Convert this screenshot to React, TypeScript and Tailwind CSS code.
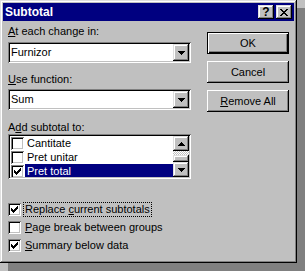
import React from 'react';

const raised =
  'shadow-[inset_-1px_-1px_0_#000,inset_1px_1px_0_#dfdfdf,inset_-2px_-2px_0_#808080,inset_2px_2px_0_#fff]';
const sunken =
  'shadow-[inset_1px_1px_0_#808080,inset_-1px_-1px_0_#fff,inset_2px_2px_0_#000,inset_-2px_-2px_0_#c0c0c0]';
const button =
  'shadow-[inset_-1px_-1px_0_#000,inset_1px_1px_0_#fff,inset_-2px_-2px_0_#808080]';
const defaultButton =
  'shadow-[inset_1px_1px_0_#000,inset_-1px_-1px_0_#000,inset_2px_2px_0_#fff,inset_-2px_-2px_0_#000,inset_-3px_-3px_0_#808080]';

function Arrow({ up }: { up?: boolean }) {
  return (
    <svg width="7" height="4" viewBox="0 0 7 4" shapeRendering="crispEdges">
      <path
        d={up ? 'M3 0h1v1h-1zM2 1h3v1h-3zM1 2h5v1h-5zM0 3h7v1h-7z' : 'M0 0h7v1h-7zM1 1h5v1h-5zM2 2h3v1h-3zM3 3h1v1h-1z'}
        fill="#000"
      />
    </svg>
  );
}

function Check() {
  return (
    <svg width="7" height="7" viewBox="0 0 7 7" shapeRendering="crispEdges">
      <path d="M6 0h1v1h-1zM5 1h2v1h-2zM0 2h1v1h-1zM4 2h3v1h-3zM0 3h2v1h-2zM3 3h3v1h-3zM0 4h5v1h-5zM1 5h3v1h-3zM2 6h1v1h-1z" fill="#000" />
    </svg>
  );
}

function CheckBox({ checked }: { checked?: boolean }) {
  return (
    <div className={`w-[13px] h-[13px] shrink-0 bg-white flex items-center justify-center ${sunken}`}>
      {checked && <Check />}
    </div>
  );
}

function Combo({ value }: { value: string }) {
  return (
    <div className={`h-[21px] bg-white flex p-[2px] ${sunken}`}>
      <span className="flex-1 pl-[1px] leading-[17px]">{value}</span>
      <div className={`w-[16px] h-[17px] bg-[#c0c0c0] flex items-center justify-center ${raised}`}>
        <Arrow />
      </div>
    </div>
  );
}

function ListRow({ label, checked, selected }: { label: string; checked?: boolean; selected?: boolean }) {
  return (
    <div className="h-[14px] shrink-0 flex items-start">
      <div className="ml-[1px] mt-[1px]">
        <CheckBox checked={checked} />
      </div>
      <span className={`flex-1 ml-[1px] pl-[2px] h-[14px] leading-[14px] ${selected ? 'bg-[#000080] text-white' : ''}`}>
        {label}
      </span>
    </div>
  );
}

function Option({ children, checked, focused }: { children: React.ReactNode; checked?: boolean; focused?: boolean }) {
  return (
    <div className="h-[13px] flex items-start">
      <CheckBox checked={checked} />
      <span
        className={`ml-[2px] -mt-[1px] px-[1px] border ${focused ? 'border-dotted border-black' : 'border-transparent'}`}
      >
        {children}
      </span>
    </div>
  );
}

export default function App() {
  return (
    <div className="w-[305px] h-[271px] bg-[#c0c0c0] text-black text-[11px] leading-[13px] font-['Liberation_Sans',Arial,sans-serif]">
      <div
        className="w-[297px] h-[263px] bg-[#c0c0c0] p-[3px] flex flex-col shadow-[inset_-1px_-1px_0_#000,inset_1px_1px_0_#dfdfdf,inset_-2px_-2px_0_#808080,inset_2px_2px_0_#fff,8px_8px_0_#808080]"
      >
        <div className="h-[18px] bg-[#000080] flex items-center px-[2px]">
          <span className="flex-1 text-white font-bold text-[12px] leading-[18px]">Subtotal</span>
          <div className="flex gap-[2px]">
            <div className={`w-[16px] h-[14px] bg-[#c0c0c0] flex items-center justify-center font-bold text-[12px] leading-none ${raised}`}>
              ?
            </div>
            <div className={`w-[16px] h-[14px] bg-[#c0c0c0] flex items-center justify-center ${raised}`}>
              <svg width="8" height="7" viewBox="0 0 8 7" shapeRendering="crispEdges">
                <path d="M0 0h2v1h-2zM6 0h2v1h-2zM1 1h2v1h-2zM5 1h2v1h-2zM2 2h4v1h-4zM3 3h2v1h-2zM2 4h4v1h-4zM1 5h2v1h-2zM5 5h2v1h-2zM0 6h2v1h-2zM6 6h2v1h-2z" fill="#000" />
              </svg>
            </div>
          </div>
        </div>

        <div className="flex pl-[5px] pt-[4px]">
          <div className="w-[183px] flex flex-col">
            <div>
              <u>A</u>t each change in:
            </div>
            <div className="mt-[4px]">
              <Combo value="Furnizor" />
            </div>
            <div className="mt-[10px]">
              <u>U</u>se function:
            </div>
            <div className="mt-[3px]">
              <Combo value="Sum" />
            </div>
            <div className="mt-[11px]">
              A<u>d</u>d subtotal to:
            </div>
            <div className={`h-[45px] bg-white p-[2px] flex ${sunken}`}>
              <div className="flex-1 flex flex-col overflow-hidden">
                <ListRow label="Cantitate" />
                <ListRow label="Pret unitar" />
                <ListRow label="Pret total" checked selected />
              </div>
              <div className="w-[16px] flex flex-col">
                <div className={`h-[15px] bg-[#c0c0c0] flex items-center justify-center ${raised}`}>
                  <Arrow up />
                </div>
                <div className="h-[4px] bg-[repeating-conic-gradient(#fff_0%_25%,#c0c0c0_0%_50%)] bg-[length:2px_2px]" />
                <div className={`h-[7px] bg-[#c0c0c0] ${raised}`} />
                <div className={`h-[15px] bg-[#c0c0c0] flex items-center justify-center ${raised}`}>
                  <Arrow />
                </div>
              </div>
            </div>
            <div className="mt-[24px] flex flex-col gap-[5px]">
              <Option checked focused>
                Replace <u>c</u>urrent subtotals
              </Option>
              <Option>
                <u>P</u>age break between groups
              </Option>
              <Option checked>
                <u>S</u>ummary below data
              </Option>
            </div>
          </div>

          <div className="ml-[16px] w-[82px] mt-[7px] flex flex-col gap-[7px]">
            <button className={`h-[22px] bg-[#c0c0c0] ${defaultButton}`}>OK</button>
            <button className={`h-[22px] bg-[#c0c0c0] ${button}`}>Cancel</button>
            <button className={`h-[22px] bg-[#c0c0c0] ${button}`}>
              <u>R</u>emove All
            </button>
          </div>
        </div>
      </div>
    </div>
  );
}
